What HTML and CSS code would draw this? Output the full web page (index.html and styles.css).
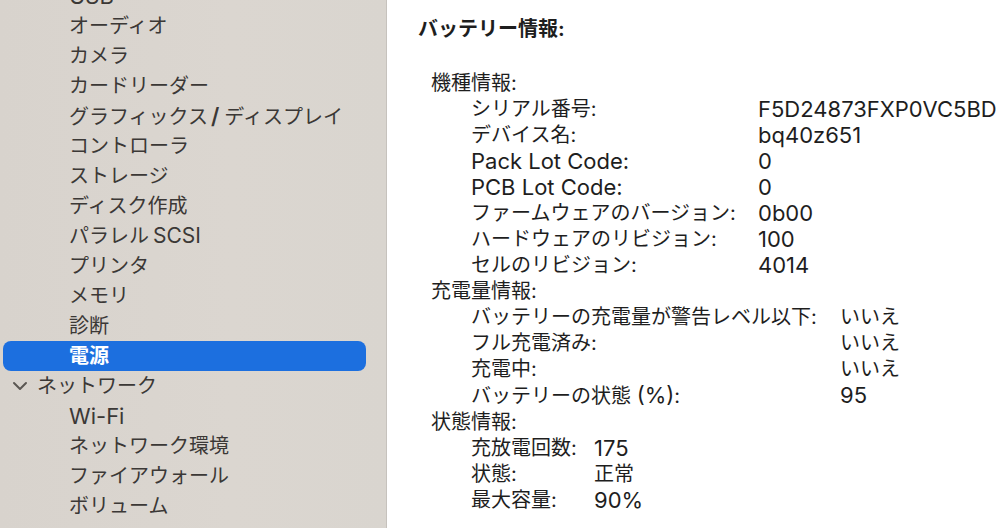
FILE: index.html
```html
<!DOCTYPE html>
<html lang="ja">
<head>
<meta charset="utf-8">
<title>システム情報 - 電源</title>
<link rel="stylesheet" href="styles.css">
</head>
<body>
<div class="window">
  <nav class="sidebar">
    <ul class="tree">
      <li class="item en">USB</li>
      <li class="item">オーディオ</li>
      <li class="item">カメラ</li>
      <li class="item">カードリーダー</li>
      <li class="item">グラフィックス<span class="slash">/</span>ディスプレイ</li>
      <li class="item">コントローラ</li>
      <li class="item">ストレージ</li>
      <li class="item">ディスク作成</li>
      <li class="item">パラレル<span class="en">SCSI</span></li>
      <li class="item">プリンタ</li>
      <li class="item">メモリ</li>
      <li class="item">診断</li>
      <li class="item selected">電源</li>
      <li class="item parent"><svg class="chevron" viewBox="0 0 16 10" width="16" height="10"><path d="M2 2 L8 8 L14 2" fill="none" stroke="currentColor" stroke-width="2" stroke-linecap="round" stroke-linejoin="round"/></svg>ネットワーク</li>
      <li class="item en">Wi-Fi</li>
      <li class="item">ネットワーク環境</li>
      <li class="item">ファイアウォール</li>
      <li class="item">ボリューム</li>
      <li class="item en">WWAN</li>
    </ul>
  </nav>
  <main class="content">
    <h1 class="title">バッテリー情報:</h1>
    <section class="group">
      <div class="group-label">機種情報:</div>
      <dl class="rows rows-model">
        <dt>シリアル番号:</dt><dd class="en">F5D24873FXP0VC5BD</dd>
        <dt>デバイス名:</dt><dd class="en">bq40z651</dd>
        <dt class="en">Pack Lot Code:</dt><dd class="en">0</dd>
        <dt class="en">PCB Lot Code:</dt><dd class="en">0</dd>
        <dt>ファームウェアのバージョン:</dt><dd class="en">0b00</dd>
        <dt>ハードウェアのリビジョン:</dt><dd class="en">100</dd>
        <dt>セルのリビジョン:</dt><dd class="en">4014</dd>
      </dl>
    </section>
    <section class="group">
      <div class="group-label">充電量情報:</div>
      <dl class="rows rows-charge">
        <dt>バッテリーの充電量が警告レベル以下:</dt><dd>いいえ</dd>
        <dt>フル充電済み:</dt><dd>いいえ</dd>
        <dt>充電中:</dt><dd>いいえ</dd>
        <dt>バッテリーの状態 <span class="en">(%)</span>:</dt><dd class="en">95</dd>
      </dl>
    </section>
    <section class="group">
      <div class="group-label">状態情報:</div>
      <dl class="rows rows-health">
        <dt>充放電回数:</dt><dd class="en">175</dd>
        <dt>状態:</dt><dd>正常</dd>
        <dt>最大容量:</dt><dd class="en">90%</dd>
      </dl>
    </section>
  </main>
</div>
</body>
</html>
```

FILE: styles.css
```css
* { box-sizing: border-box; }
html, body {
  margin: 0;
  padding: 0;
  width: 1004px;
  height: 528px;
  overflow: hidden;
  background: #ffffff;
}
body {
  font-family: Inter, "Noto Sans CJK JP", sans-serif;
  font-size: 20px;
  -webkit-font-smoothing: antialiased;
}
.en {
  font-family: Inter, "Noto Sans CJK JP", sans-serif;
  font-size: 22px;
}
.window {
  display: flex;
  height: 528px;
}
.sidebar {
  flex: 0 0 387px;
  background: linear-gradient(90deg, #d8d3cd 0%, #dbd6d0 60%, #d9d5cf 100%);
  border-right: 1px solid #c6c2bd;
  overflow: hidden;
  color: #3b3836;
}
.tree {
  list-style: none;
  margin: -19px 0 0 0;
  padding: 0;
}
.item {
  height: 30px;
  line-height: 30px;
  margin-left: 3px;
  width: 363px;
  padding-left: 66px;
  white-space: nowrap;
  border-radius: 8px;
}
.item .en { font-size: 21px; margin-left: 4px; }
.slash {
  font-family: Inter, sans-serif;
  font-size: 22px;
  font-weight: 600;
  padding: 0 5px 0 3px;
}
.item.selected {
  background: #1c6fdf;
  color: #ffffff;
  font-weight: 700;
}
.item.parent {
  padding-left: 9px;
  display: flex;
  align-items: center;
  gap: 9px;
}
.chevron {
  color: #5b5753;
  flex: 0 0 16px;
}
.content {
  flex: 1;
  padding: 16px 0 0 31px;
  color: #1e1e1e;
  overflow: hidden;
}
.title {
  margin: 0 0 28px 0;
  font-size: 20px;
  font-weight: 700;
  line-height: 26px;
}
.group-label {
  line-height: 26px;
  padding-left: 13px;
}
.rows {
  display: grid;
  margin: 0;
  padding-left: 53px;
  line-height: 26px;
}
.rows dt, .rows dd { margin: 0; white-space: nowrap; }
.rows-model { grid-template-columns: 287px auto; }
.rows-charge { grid-template-columns: 369px auto; }
.rows-health { grid-template-columns: 123px auto; }
```
